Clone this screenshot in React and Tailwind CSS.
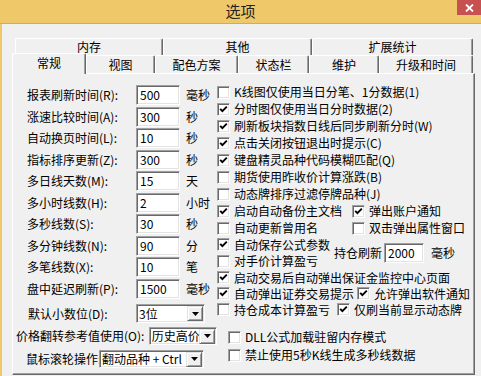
import React from "react";

const sunken =
  "bg-white border border-t-[#a0a0a0] border-l-[#a0a0a0] border-b-white border-r-white shadow-[inset_1px_1px_0_#696969,inset_-1px_-1px_0_#e3e3e3]";
const raised =
  "bg-[#f0f0f0] border border-t-[#e3e3e3] border-l-[#e3e3e3] border-b-[#696969] border-r-[#696969] shadow-[inset_1px_1px_0_#ffffff,inset_-1px_-1px_0_#a0a0a0]";

function Check({ checked }) {
  return (
    <span className={`w-[13px] h-[13px] shrink-0 flex items-center justify-center ${sunken}`}>
      {checked && (
        <svg width="9" height="9" viewBox="0 0 9 9">
          <path d="M1.2 3.8 L3.4 6.2 L7.8 1.6" fill="none" stroke="#000" strokeWidth="1.9" />
        </svg>
      )}
    </span>
  );
}

function Cb({ checked, children, className = "" }) {
  return (
    <div className={`flex items-center gap-[4px] whitespace-nowrap ${className}`}>
      <Check checked={checked} />
      <span>{children}</span>
    </div>
  );
}

function Field({ value, className = "" }) {
  return (
    <div className={`h-[20px] pl-[3px] flex items-center ${sunken} ${className}`}>{value}</div>
  );
}

function Combo({ value, className = "" }) {
  return (
    <div className={`flex items-center pr-[1px] whitespace-nowrap overflow-hidden ${sunken} ${className}`}>
      <span className="flex-1 min-w-0 pl-[2px] overflow-hidden">{value}</span>
      <span className={`w-[16px] h-[15px] shrink-0 flex items-center justify-center ${raised}`}>
        <svg width="7" height="4" viewBox="0 0 7 4">
          <path d="M0 0 H7 L3.5 4 Z" fill="#000" />
        </svg>
      </span>
    </div>
  );
}

function Row({ label, value, unit }) {
  return (
    <div className="flex items-center h-[20px]">
      <span className="w-[109px] whitespace-nowrap">{label}</span>
      <Field value={value} className="w-[44px]" />
      <span className="ml-[6px]">{unit}</span>
    </div>
  );
}

const tab =
  "flex items-center justify-center border-t border-l border-r border-t-white border-l-white border-r-[#696969] shadow-[inset_-1px_0_0_#a0a0a0] rounded-t-[2px]";

export default function App() {
  return (
    <div className="w-[481px] h-[376px] bg-[#f0f0f0] flex flex-col overflow-hidden text-[12px] text-black font-['Noto_Sans_CJK_SC','Microsoft_YaHei',sans-serif]">
      {/* title bar */}
      <div className="h-[24px] shrink-0 bg-[#efc86a] border-b border-[#d8ab52] flex items-start">
        <div className="w-[24px]" />
        <div className="flex-1 h-[23px] flex items-center justify-center text-[15px] text-[#222]">选项</div>
        <div className="w-[24px] h-[15px] bg-[#c75050] flex items-center justify-center">
          <svg width="9" height="8" viewBox="0 0 9 8">
            <path d="M1 0.5 L8 7.5 M8 0.5 L1 7.5" stroke="#fff" strokeWidth="1.8" />
          </svg>
        </div>
      </div>

      <div className="flex-1 flex flex-col border-l-[2px] border-[#efc86a] pl-[10px] pt-[14px] pb-[1px]">
        {/* tabs row 1 */}
        <div className="flex ml-[3px] h-[17px]">
          <div className={`${tab} w-[148px]`}>内存</div>
          <div className={`${tab} w-[149px]`}>其他</div>
          <div className={`${tab} w-[161px]`}>扩展统计</div>
        </div>
        {/* tabs row 2 */}
        <div className="flex items-end h-[18px]">
          <div className={`${tab} w-[74px] h-[21px] -mt-[3px] -mb-[1px] relative z-10 bg-[#f0f0f0] pb-[2px]`}>常规</div>
          <div className={`${tab} w-[69px] h-[18px]`}>视图</div>
          <div className={`${tab} w-[83px] h-[18px]`}>配色方案</div>
          <div className={`${tab} w-[71px] h-[18px]`}>状态栏</div>
          <div className={`${tab} w-[70px] h-[18px]`}>维护</div>
          <div className={`${tab} w-[94px] h-[18px]`}>升级和时间</div>
        </div>

        {/* panel */}
        <div className="w-[463px] flex-1 flex border-t border-l border-white border-r border-b border-r-[#696969] border-b-[#696969] shadow-[inset_-1px_-1px_0_#a0a0a0]">
          {/* left column */}
          <div className="w-[204px] shrink-0 pl-[14px] pt-[11px] flex flex-col">
            <div className="flex flex-col gap-[1.5px]">
              <Row label="报表刷新时间(R):" value="500" unit="毫秒" />
              <Row label="涨速比较时间(A):" value="300" unit="秒" />
              <Row label="自动换页时间(L):" value="10" unit="秒" />
              <Row label="指标排序更新(Z):" value="300" unit="秒" />
              <Row label="多日线天数(M):" value="15" unit="天" />
              <Row label="多小时线数(H):" value="2" unit="小时" />
              <Row label="多秒线数(S):" value="30" unit="秒" />
              <Row label="多分钟线数(N):" value="90" unit="分" />
              <Row label="多笔线数(X):" value="10" unit="笔" />
              <Row label="盘中延迟刷新(P):" value="1500" unit="毫秒" />
            </div>
            <div className="flex items-center h-[19px] mt-[5.5px]">
              <span className="w-[109px] pl-[1px] whitespace-nowrap">默认小数位(D):</span>
              <Combo value="3位" className="w-[69px] h-[19px]" />
            </div>
            <div className="flex items-center h-[18px] mt-[4px] -ml-[11px]">
              <span className="w-[136px] whitespace-nowrap">价格翻转参考值使用(O):</span>
              <Combo value="历史高价" className="w-[70px] h-[18px]" />
            </div>
            <div className="flex items-center h-[18px] mt-[5px] -ml-[1px]">
              <span className="w-[73px] whitespace-nowrap">鼠标滚轮操作:</span>
              <Combo value="翻动品种 + Ctrl" className="w-[105px] h-[18px]" />
            </div>
          </div>

          {/* right column */}
          <div className="flex-1 pt-[9.5px] flex flex-col">
            <Cb className="h-[17px]">K线图仅使用当日分笔、1分数据(1)</Cb>
            <Cb className="h-[17px]" checked>分时图仅使用当日分时数据(2)</Cb>
            <Cb className="h-[17px]" checked>刷新板块指数日线后同步刷新分时(W)</Cb>
            <Cb className="h-[17px]" checked>点击关闭按钮退出时提示(C)</Cb>
            <Cb className="h-[17px]" checked>键盘精灵品种代码模糊匹配(Q)</Cb>
            <Cb className="h-[17px]">期货使用昨收价计算涨跌(B)</Cb>
            <Cb className="h-[17px]">动态牌排序过滤停牌品种(J)</Cb>
            <div className="flex h-[17px]">
              <Cb className="w-[135px]" checked>启动自动备份主文档</Cb>
              <Cb checked>弹出账户通知</Cb>
            </div>
            <div className="flex h-[17px]">
              <Cb className="w-[135px]">自动更新曾用名</Cb>
              <Cb>双击弹出属性窗口</Cb>
            </div>
            <div className="flex items-center">
              <div className="w-[117px] flex flex-col">
                <Cb className="h-[16px]" checked>自动保存公式参数</Cb>
                <Cb className="h-[17px]">对手价计算盈亏</Cb>
              </div>
              <span>持仓刷新</span>
              <Field value="2000" className="w-[40px] h-[17px] ml-[2px]" />
              <span className="ml-[7px]">毫秒</span>
            </div>
            <Cb className="h-[16px]" checked>启动交易后自动弹出保证金监控中心页面</Cb>
            <div className="flex h-[16px]">
              <Cb className="w-[140px]" checked>自动弹出证券交易提示</Cb>
              <Cb checked>允许弹出软件通知</Cb>
            </div>
            <div className="flex h-[16px]">
              <Cb className="w-[120px]">持仓成本计算盈亏</Cb>
              <Cb checked>仅刷当前显示动态牌</Cb>
            </div>
            <Cb className="h-[17px] mt-[11px] pl-[11px]">DLL公式加载驻留内存模式</Cb>
            <Cb className="h-[17px] mt-[1px] pl-[11px]">禁止使用5秒K线生成多秒线数据</Cb>
          </div>
        </div>
      </div>
    </div>
  );
}
